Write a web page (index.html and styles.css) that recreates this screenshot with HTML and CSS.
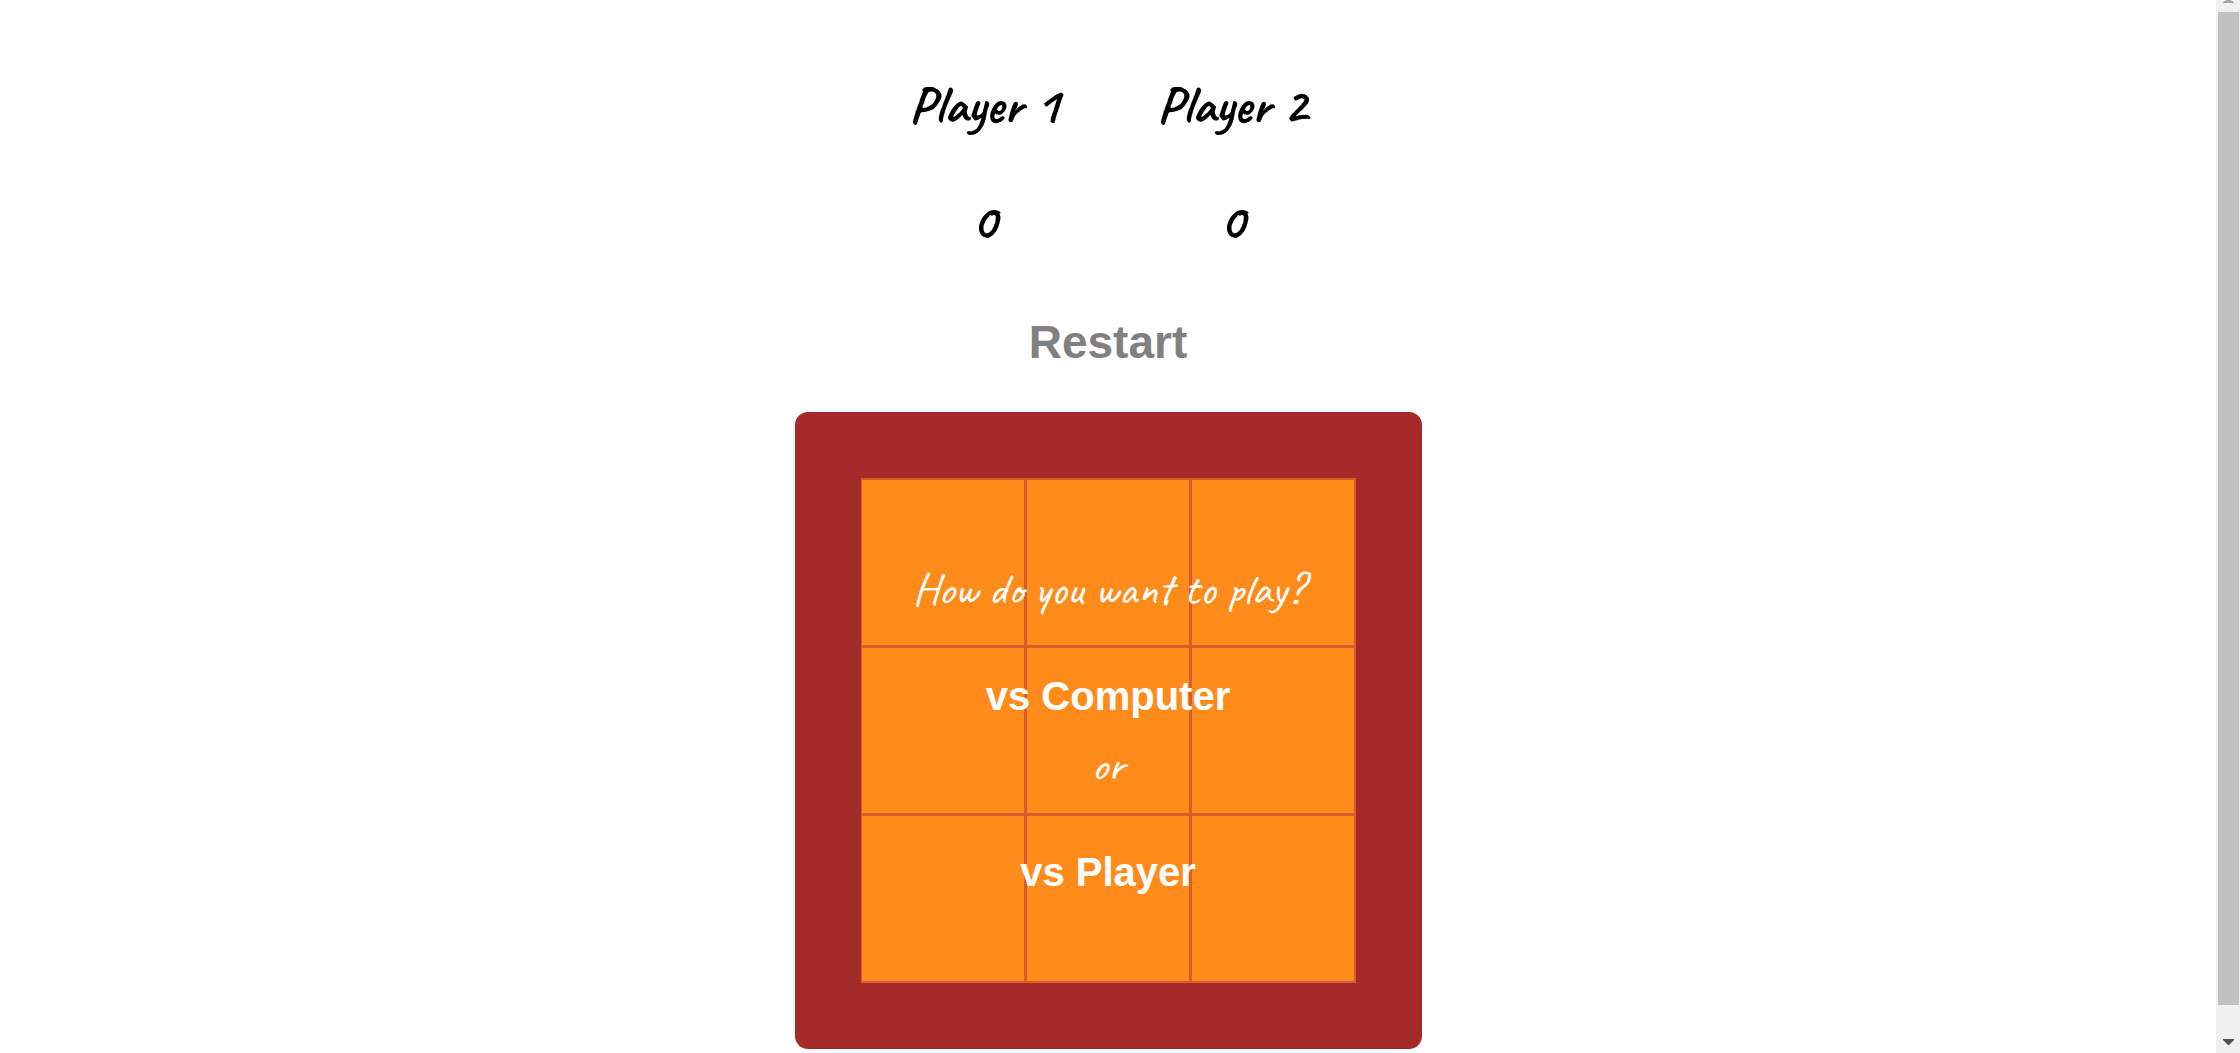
FILE: index.html
```html
<!DOCTYPE html>
<html lang="en">
<head>
<meta charset="utf-8">
<meta name="viewport" content="width=device-width, initial-scale=1">
<title>Tic Tac Toe</title>
<link rel="stylesheet" href="styles.css">
</head>
<body>
<main class="game">
  <section class="scores">
    <div class="player">
      <h2 class="player-name">Player 1</h2>
      <p class="player-score">0</p>
    </div>
    <div class="player">
      <h2 class="player-name">Player 2</h2>
      <p class="player-score">0</p>
    </div>
  </section>
  <button class="restart" type="button">Restart</button>
  <section class="board">
    <div class="cells">
      <span class="cell"></span><span class="cell"></span><span class="cell"></span>
      <span class="cell"></span><span class="cell"></span><span class="cell"></span>
      <span class="cell"></span><span class="cell"></span><span class="cell"></span>
    </div>
    <div class="chooser">
      <p class="question">How do you want to play?</p>
      <button class="mode" type="button">vs Computer</button>
      <p class="or">or</p>
      <button class="mode" type="button">vs Player</button>
    </div>
  </section>
</main>
<div class="scrollbar" aria-hidden="true">
  <svg class="arrow-up" width="24" height="12" viewBox="0 0 24 12"><path d="M10 0h5v1h2v1h1v1H7V2h1V1h2z" fill="#a3a3a3"/></svg>
  <div class="thumb"></div>
  <svg class="arrow-down" width="24" height="48" viewBox="0 0 24 48"><path d="M7 34h11v1l-5 5h-1l-5-5z" fill="#505050"/></svg>
</div>
</body>
</html>
```
FILE: styles.css
```css
* { box-sizing: border-box; }

body {
  display: flex;
  min-height: 100vh;
  margin: 0;
  background: #fff;
  color: #000;
  font-family: "Liberation Sans", Arial, sans-serif;
}

h2, p { margin: 0; }

button {
  padding: 0;
  border: 0;
  background: none;
  font-family: inherit;
  font-weight: bold;
  line-height: 60px;
  cursor: pointer;
}

.game {
  flex: 1;
  display: flex;
  flex-direction: column;
  align-items: center;
  padding-top: 75px;
}

.scores {
  display: flex;
}

.player {
  display: flex;
  flex-direction: column;
  gap: 56px;
  width: 248px;
  text-align: center;
}

.player-name,
.player-score,
.question,
.or {
  font-family: Caveat, cursive;
  line-height: 60px;
}

.player-name,
.player-score {
  font-size: 53px;
  font-weight: bold;
}

.restart {
  margin: 61px 0 40px;
  color: gray;
  font-size: 46px;
}

.board {
  display: grid;
  padding: 66px;
  border-radius: 13px;
  background: #a52a2a;
}

.cells,
.chooser { grid-area: 1 / 1; }

.cells {
  display: grid;
  grid-template-columns: repeat(3, 162px);
  grid-auto-rows: 165px;
  gap: 3px;
  padding: 2px 2px 2px 1px;
  background: #d95c2b;
}

.cell { background: #ff8c1a; }

.chooser {
  display: flex;
  flex-direction: column;
  align-items: center;
  padding-top: 81px;
  color: #fff;
}

.question,
.or {
  font-size: 46px;
  font-weight: 500;
}

.question { margin-bottom: 47px; }

.or { margin: 9px 0 47px; }

.mode {
  color: #fff;
  font-size: 40px;
}

.scrollbar {
  display: flex;
  flex-direction: column;
  width: 24px;
  background: #f0f0f0;
}

.thumb {
  flex: 1;
  margin: 0 1px 0 2px;
  background: #c1c1c1;
}
```
